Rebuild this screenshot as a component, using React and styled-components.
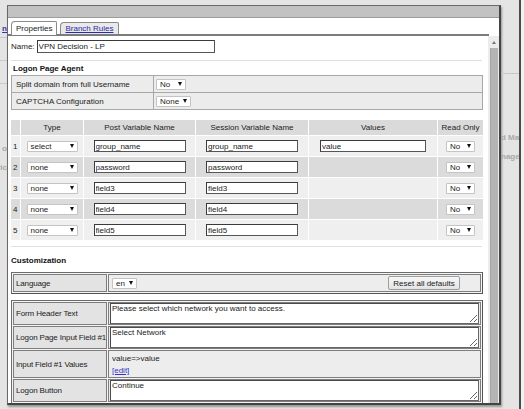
import React from 'react';
import styled, { createGlobalStyle } from 'styled-components';

const Global = createGlobalStyle`
  html, body { margin: 0; padding: 0; background: #e6e6e6; overflow: hidden; }
  body { font-family: "Liberation Sans", Arial, sans-serif; font-size: 8px; color: #222; }
`;

const Page = styled.div`
  display: flex;
  width: 524px;
  height: 409px;
  padding-top: 5px;
  box-sizing: border-box;
  background: #e4e4e4;
`;

const LeftGutter = styled.div`
  width: 7px;
  flex: none;
  display: flex;
  flex-direction: column;
  overflow: hidden;
  color: #9a9a9a;
  font-weight: bold;
`;

const GutterLine = styled.div`
  height: ${p => p.h}px;
  border-bottom: 1px solid ${p => p.c || '#c8c8c8'};
  white-space: nowrap;
  line-height: ${p => p.h}px;
  color: ${p => p.link ? '#3333aa' : '#a0a0a0'};
  text-decoration: ${p => p.link ? 'underline' : 'none'};
  direction: rtl;
`;

const GutterText = styled.div`
  white-space: nowrap;
  line-height: 19px;
  color: #a8a8a8;
  font-weight: bold;
  direction: ${p => p.rtl ? 'rtl' : 'ltr'};
`;

const Dialog = styled.div`
  width: 494px;
  height: 400px;
  flex: none;
  box-sizing: border-box;
  border: 1px solid #6a6a6a;
  border-right: 2px solid #444;
  border-bottom: 2px solid #444;
  background: #fff;
  display: flex;
  flex-direction: column;
  box-shadow: 1px 2px 2px rgba(0,0,0,0.35);
`;

const TitleBar = styled.div`
  height: 11px;
  flex: none;
  background: #c2c2c2;
  border-bottom: 1px solid #9c9c9c;
`;

const TabStrip = styled.div`
  height: 16px;
  flex: none;
  display: flex;
  align-items: flex-end;
  gap: 3px;
  padding-left: 3px;
  margin-right: 10px;
  border-bottom: 2px solid #7c7c7c;
`;

const Tab = styled.div`
  height: ${p => p.active ? 14 : 12}px;
  box-sizing: border-box;
  padding: 0 4px;
  display: flex;
  align-items: center;
  border: 1px solid #8a8a8a;
  border-bottom: none;
  border-radius: 4px 2px 0 0;
  background: ${p => p.active ? '#fff' : '#e9e9e9'};
  color: ${p => p.active ? '#222' : '#2b2ba8'};
  text-decoration: ${p => p.active ? 'none' : 'underline'};
  margin-bottom: ${p => p.active ? -1 : 0}px;
`;

const Body = styled.div`
  flex: 1;
  display: flex;
  min-height: 0;
`;

const Content = styled.div`
  flex: 1;
  padding: 4px 5px 0 3px;
  overflow: hidden;
  display: flex;
  flex-direction: column;
`;

const Scrollbar = styled.div`
  width: 11px;
  flex: none;
  background: #ececec;
  display: flex;
  flex-direction: column;
  align-items: center;
`;

const ScrollArrow = styled.div`
  height: 12px;
  width: 100%;
  display: flex;
  align-items: center;
  justify-content: center;
  &::after {
    content: '';
    border-left: 2px solid transparent;
    border-right: 2px solid transparent;
    border-bottom: 3px solid #777;
  }
`;

const ScrollThumb = styled.div`
  flex: 1;
  width: 7px;
  background: #b4b4b4;
  border-left: 1px solid #a6a6a6;
`;

const RightGutter = styled.div`
  width: 18px;
  flex: none;
  margin-top: -5px;
  overflow: hidden;
  display: flex;
  flex-direction: column;
`;

const RightEdge = styled.div`
  width: 2px;
  flex: none;
  margin-top: -5px;
  background: #4a4a4a;
`;

const RightRest = styled.div`
  flex: 1;
  margin-top: -5px;
  background: #f2f2f2;
`;

const NameRow = styled.div`
  height: 13px;
  display: flex;
  align-items: center;
  gap: 2px;
`;

const Input = styled.input`
  box-sizing: border-box;
  width: ${p => p.w}px;
  height: ${p => p.h || 12}px;
  padding: 0 1px;
  border: 1px solid #3a3a3a;
  border-right-color: #555;
  border-bottom-color: #555;
  background: #fff;
  font: inherit;
  color: #222;
  outline: none;
`;

const Divider = styled.div`
  margin-top: ${p => p.top}px;
  border-top: 1px solid #e0e0e0;
  margin-right: 1px;
`;

const SectionTitle = styled.div`
  margin-top: ${p => p.top}px;
  padding-left: ${p => p.indent || 0}px;
  line-height: 10px;
  font-weight: bold;
  color: #111;
`;

const AgentTable = styled.table`
  margin-top: 1px;
  width: 472px;
  border-collapse: collapse;
  border: 1px solid #a4a4a4;
  td {
    height: 16px;
    padding: 0 0 0 4px;
    background: #ececec;
    border: 1px solid #a8a8a8;
  }
  td:first-child { width: 137px; }
  td + td { padding-left: 2px; }
`;

const Select = styled.div`
  display: inline-flex;
  align-items: center;
  justify-content: space-between;
  box-sizing: border-box;
  width: ${p => p.w}px;
  height: 11px;
  padding: 0 3px 0 3px;
  background: #fff;
  border: 1px solid #c4c4c4;
  border-radius: 1px;
  vertical-align: middle;
  text-align: left;
  &::after {
    content: '';
    border-left: 2px solid transparent;
    border-right: 2px solid transparent;
    border-top: 4px solid #111;
  }
`;

const VarTable = styled.table`
  margin-top: 9px;
  margin-left: -1px;
  width: 474px;
  table-layout: fixed;
  border-spacing: 1px;
  background: #fff;
  th {
    height: 15px;
    padding: 0;
    font-weight: normal;
    background: #dadada;
    text-align: center;
  }
  td {
    height: 20px;
    padding: 0;
    text-align: center;
  }
  td:first-child { text-align: left; padding-left: 2px; }
`;

const VarRow = styled.tr`
  td { background: ${p => p.dark ? '#dbdbdb' : '#efefef'}; }
`;

const BoxTable = styled.table`
  margin-top: ${p => p.top}px;
  width: 472px;
  table-layout: fixed;
  border-spacing: 1px;
  border: 1px solid #6c6c6c;
  border-right-color: #555;
  border-bottom-color: #555;
  background: #f4f4f4;
  td {
    border: 1px solid #7e7e7e;
    padding: 0;
    height: ${p => p.rowH || 20}px;
    vertical-align: middle;
    background: #ededed;
  }
  td:first-child {
    width: 90px;
    padding-left: 2px;
    white-space: nowrap;
    overflow: hidden;
    letter-spacing: -0.15px;
    background: #e3e3e3;
  }
  td + td { padding-left: 1px; padding-right: 1px; }
`;

const LangCell = styled.div`
  display: flex;
  align-items: center;
  justify-content: space-between;
  padding: 0 19px 0 2px;
`;

const ResetButton = styled.div`
  height: 14px;
  width: 72px;
  box-sizing: border-box;
  display: flex;
  align-items: center;
  justify-content: center;
  border: 1px solid #9e9e9e;
  border-radius: 2px;
  background: linear-gradient(#f7f7f7, #e4e4e4);
  color: #222;
`;

const TextArea = styled.textarea`
  display: block;
  box-sizing: border-box;
  width: 100%;
  height: ${p => p.h || 21}px;
  margin: 0;
  padding: 0 1px;
  border: 1px solid #4a4a4a;
  border-right-color: #666;
  border-bottom-color: #666;
  background: #fff;
  font: inherit;
  line-height: 10px;
  color: #222;
  resize: vertical;
  outline: none;
  overflow: hidden;
`;

const ValuesCell = styled.div`
  padding: 2px 2px 0 2px;
  line-height: 12px;
`;

const Link = styled.span`
  color: #3333cc;
  text-decoration: underline;
`;

const vars = [
  { type: 'select', post: 'group_name', sess: 'group_name', value: 'value' },
  { type: 'none', post: 'password', sess: 'password' },
  { type: 'none', post: 'field3', sess: 'field3' },
  { type: 'none', post: 'field4', sess: 'field4' },
  { type: 'none', post: 'field5', sess: 'field5' },
];

export default function App() {
  return (
    <>
      <Global />
      <Page>
        <LeftGutter>
          <GutterLine h={14} c="#e4e4e4" />
          <GutterLine h={17} link>n</GutterLine>
          <GutterLine h={22} />
          <GutterLine h={22} />
          <div style={{ height: 55 }} />
          <GutterText rtl>o</GutterText>
          <GutterText rtl>ric</GutterText>
        </LeftGutter>

        <Dialog>
          <TitleBar />
          <TabStrip>
            <Tab active>Properties</Tab>
            <Tab>Branch Rules</Tab>
          </TabStrip>
          <Body>
            <Content>
              <NameRow>
                <span>Name:</span>
                <Input w={178} h={13} defaultValue="VPN Decision - LP" readOnly />
              </NameRow>
              <Divider top={7} />
              <SectionTitle top={3} indent={2}>Logon Page Agent</SectionTitle>
              <AgentTable>
                <tbody>
                  <tr>
                    <td>Split domain from full Username</td>
                    <td><Select w={30}>No</Select></td>
                  </tr>
                  <tr>
                    <td>CAPTCHA Configuration</td>
                    <td><Select w={35}>None</Select></td>
                  </tr>
                </tbody>
              </AgentTable>

              <VarTable>
                <colgroup>
                  <col style={{ width: 9 }} />
                  <col style={{ width: 62 }} />
                  <col style={{ width: 111 }} />
                  <col style={{ width: 112 }} />
                  <col style={{ width: 128 }} />
                  <col style={{ width: 45 }} />
                </colgroup>
                <thead>
                  <tr>
                    <th></th>
                    <th>Type</th>
                    <th>Post Variable Name</th>
                    <th>Session Variable Name</th>
                    <th>Values</th>
                    <th>Read Only</th>
                  </tr>
                </thead>
                <tbody>
                  {vars.map((v, i) => (
                    <VarRow key={i} dark={i % 2 === 1}>
                      <td>{i + 1}</td>
                      <td><Select w={51}>{v.type}</Select></td>
                      <td><Input w={92} defaultValue={v.post} readOnly /></td>
                      <td><Input w={92} defaultValue={v.sess} readOnly /></td>
                      <td>{v.value && <Input w={106} defaultValue={v.value} readOnly />}</td>
                      <td><Select w={29}>No</Select></td>
                    </VarRow>
                  ))}
                </tbody>
              </VarTable>

              <Divider top={5} />
              <SectionTitle top={9}>Customization</SectionTitle>

              <BoxTable top={6} rowH={16}>
                <tbody>
                  <tr>
                    <td>Language</td>
                    <td>
                      <LangCell>
                        <Select w={25}>en</Select>
                        <ResetButton>Reset all defaults</ResetButton>
                      </LangCell>
                    </td>
                  </tr>
                </tbody>
              </BoxTable>

              <BoxTable top={6} rowH={21}>
                <tbody>
                  <tr>
                    <td>Form Header Text</td>
                    <td><TextArea defaultValue="Please select which network you want to access." readOnly /></td>
                  </tr>
                  <tr>
                    <td>Logon Page Input Field #1</td>
                    <td><TextArea defaultValue="Select Network" readOnly /></td>
                  </tr>
                  <tr>
                    <td>Input Field #1 Values</td>
                    <td>
                      <ValuesCell>
                        <div>value=&gt;value</div>
                        <div><Link>[edit]</Link></div>
                      </ValuesCell>
                    </td>
                  </tr>
                  <tr>
                    <td>Logon Button</td>
                    <td><TextArea defaultValue="Continue" readOnly /></td>
                  </tr>
                  <tr>
                    <td>&nbsp;</td>
                    <td><TextArea defaultValue="" readOnly /></td>
                  </tr>
                </tbody>
              </BoxTable>
            </Content>
            <Scrollbar>
              <ScrollArrow />
              <ScrollThumb />
            </Scrollbar>
          </Body>
        </Dialog>

        <RightGutter>
          <div style={{ height: 73, borderBottom: '1px solid #c8c8c8' }} />
          <div style={{ height: 54 }} />
          <GutterText>d Ma</GutterText>
          <GutterText>nage</GutterText>
        </RightGutter>
        <RightEdge />
        <RightRest />
      </Page>
    </>
  );
}
